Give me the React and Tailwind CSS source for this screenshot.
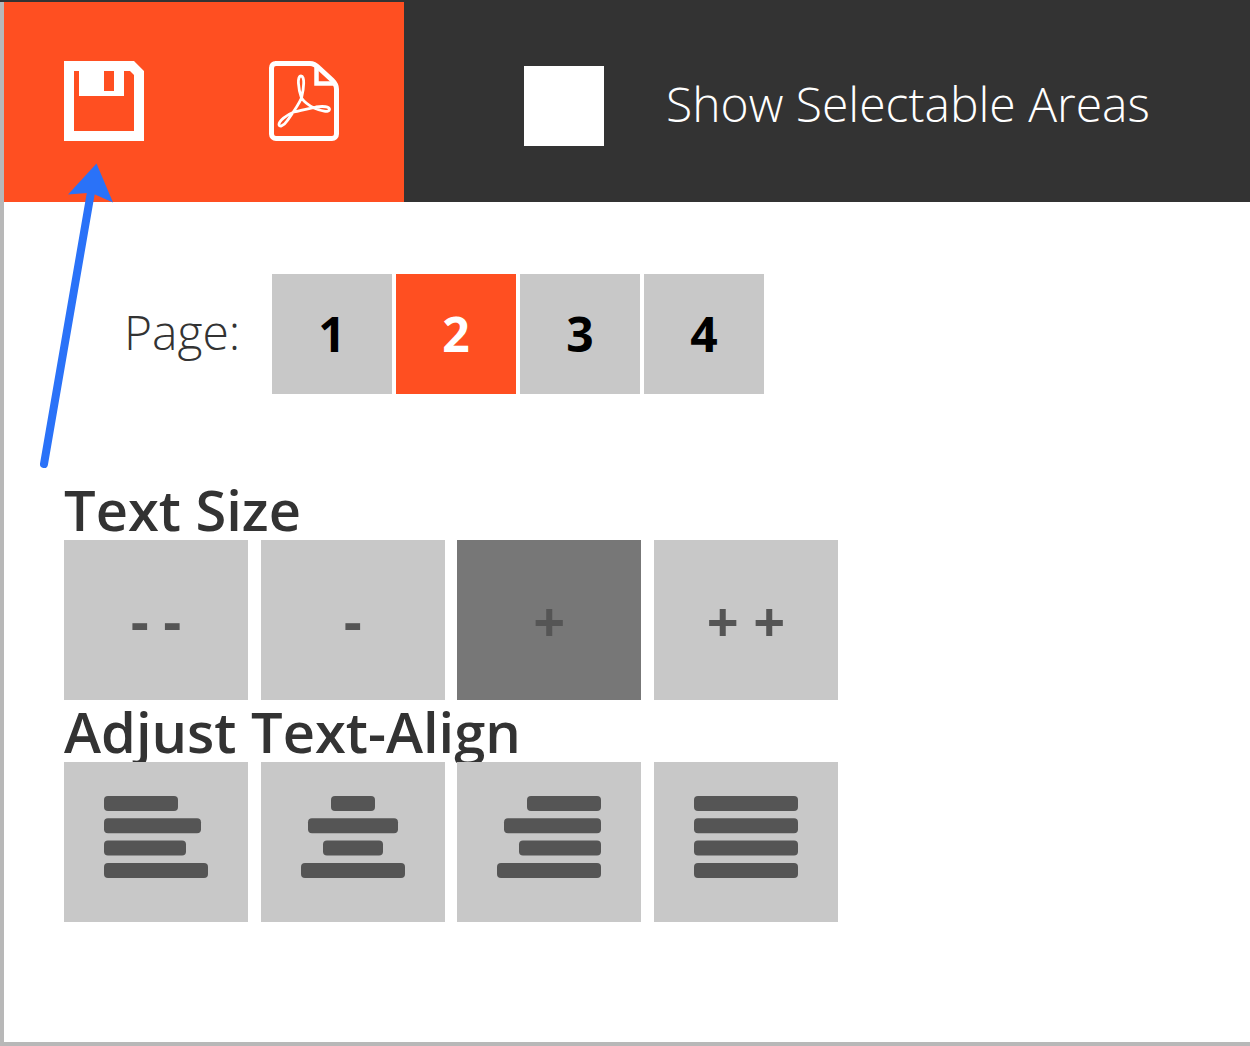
import React, { useState } from 'react';

const pages = [1, 2, 3, 4];

const sizes = [
  { label: '- -', name: 'Much smaller' },
  { label: '-', name: 'Smaller' },
  { label: '+', name: 'Larger' },
  { label: '+ +', name: 'Much larger' },
];

// each bar is [x, width]
const aligns = [
  { name: 'Align left', bars: [[0, 74], [0, 97], [0, 82], [0, 104]] },
  { name: 'Align center', bars: [[30, 44], [7, 90], [22, 60], [0, 104]] },
  { name: 'Align right', bars: [[30, 74], [7, 97], [22, 82], [0, 104]] },
  { name: 'Justify', bars: [[0, 104], [0, 104], [0, 104], [0, 104]] },
];

const SaveIcon = () => (
  <svg viewBox="0 0 80 80" className="size-20" fill="currentColor" aria-hidden="true">
    <path
      fillRule="evenodd"
      d="M0 0H70L80 10V80H0ZM10 10V70H70V14L66 10H60V35H15V10ZM40 10V30H50V10Z"
    />
  </svg>
);

const PdfIcon = () => (
  <svg
    viewBox="0 0 80 80"
    className="size-20"
    fill="none"
    stroke="currentColor"
    aria-hidden="true"
  >
    <path
      strokeWidth="5"
      d="M11 2.5H46C50 2.5 52 4 55 7L68 19C71 22 72.5 24 72.5 28V73C72.5 75.5 70.5 77.5 68 77.5H12C9.5 77.5 7.5 75.5 7.5 73V7C7.5 4.5 9 2.5 12 2.5"
    />
    <path strokeWidth="4.5" d="M52.5 4V22.5H72" />
    <path
      strokeWidth="2.8"
      strokeLinejoin="round"
      d="M37.5 37C34 27 33 15 37 15C41 15 40 27 37.5 37C34 45 28 53 23 60C19 66 15 66 15 63.5C15 60 22 54 30 51C37 49 45 47.5 52 46C59 45 66 45.5 65.5 48.5C65 52 57 50 50 47C44 44 41 42 37.5 37Z"
    />
  </svg>
);

const AlignIcon = ({ bars }) => (
  <svg viewBox="0 0 104 82" className="w-[104px]" fill="currentColor" aria-hidden="true">
    {bars.map(([x, width], index) => (
      <rect key={index} x={x} y={index * 22.3} width={width} height="15" rx="4" />
    ))}
  </svg>
);

const Pointer = () => (
  <svg
    viewBox="0 0 80 310"
    className="absolute left-[36px] top-[158px] w-[80px] pointer-events-none"
    aria-hidden="true"
  >
    <path d="M8 304L55 32" stroke="#2a72f8" strokeWidth="8" strokeLinecap="round" />
    <path d="M60.5 3.5L32 34.5L51 33L59 34.5L77 42.5Z" fill="#2a72f8" />
  </svg>
);

const OptionRow = ({ title, items, selected, onSelect, children }) => (
  <section>
    <h2 className="text-[56px] leading-[62px] font-semibold">{title}</h2>
    {/* relative keeps the buttons above the title's descenders */}
    <div className="relative flex justify-between max-w-[774px]">
      {items.map((item, index) => (
        <button
          key={item.name}
          type="button"
          aria-label={item.name}
          aria-pressed={selected === index}
          onClick={() => onSelect(index)}
          className={`flex items-center justify-center w-[184px] h-40 text-[56px] font-bold text-[#555555] ${
            selected === index ? 'bg-[#777777]' : 'bg-[#c8c8c8]'
          }`}
        >
          {children(item)}
        </button>
      ))}
    </div>
  </section>
);

const App = () => {
  const [page, setPage] = useState(2);
  const [size, setSize] = useState(2);
  const [align, setAlign] = useState(null);
  const [showAreas, setShowAreas] = useState(false);

  return (
    <div className="relative flex flex-col min-h-screen border-t-2 border-[#333333] bg-white text-[#333333] font-['Open_Sans',sans-serif]">
      <div className="flex-1 border-l-4 border-b-4 border-[#b8b8b8]">
        <header className="flex h-50 bg-[#333333] text-white">
          <div className="flex shrink-0 bg-[#ff4f21]">
            <button
              type="button"
              aria-label="Save"
              className="flex items-center justify-center w-50 pb-0.5"
            >
              <SaveIcon />
            </button>
            <button
              type="button"
              aria-label="Export PDF"
              className="flex items-center justify-center w-50 pb-0.5"
            >
              <PdfIcon />
            </button>
          </div>
          <label className="flex items-start gap-[62px] pt-16 pl-30 text-5xl font-light">
            <input
              type="checkbox"
              checked={showAreas}
              onChange={(e) => setShowAreas(e.target.checked)}
              className="shrink-0 size-20 appearance-none bg-white checked:bg-[#ff4f21]"
            />
            <span className="leading-[76px]">Show Selectable Areas</span>
          </label>
        </header>

        <main className="px-15 pt-18 pb-30">
          <nav aria-label="Page" className="flex items-center pl-15">
            <span className="w-37 pb-1 text-5xl font-light">Page:</span>
            <div className="flex gap-1">
              {pages.map((number) => (
                <button
                  key={number}
                  type="button"
                  onClick={() => setPage(number)}
                  className={`size-30 text-5xl font-bold ${
                    page === number ? 'bg-[#ff4f21] text-white' : 'bg-[#c8c8c8] text-black'
                  }`}
                >
                  {number}
                </button>
              ))}
            </div>
          </nav>

          <div className="mt-21">
            <OptionRow title="Text Size" items={sizes} selected={size} onSelect={setSize}>
              {(item) => item.label}
            </OptionRow>
            <OptionRow
              title="Adjust Text-Align"
              items={aligns}
              selected={align}
              onSelect={setAlign}
            >
              {(item) => (
                <span className="pb-2.5">
                  <AlignIcon bars={item.bars} />
                </span>
              )}
            </OptionRow>
          </div>
        </main>
      </div>
      <Pointer />
    </div>
  );
};

export default App;
